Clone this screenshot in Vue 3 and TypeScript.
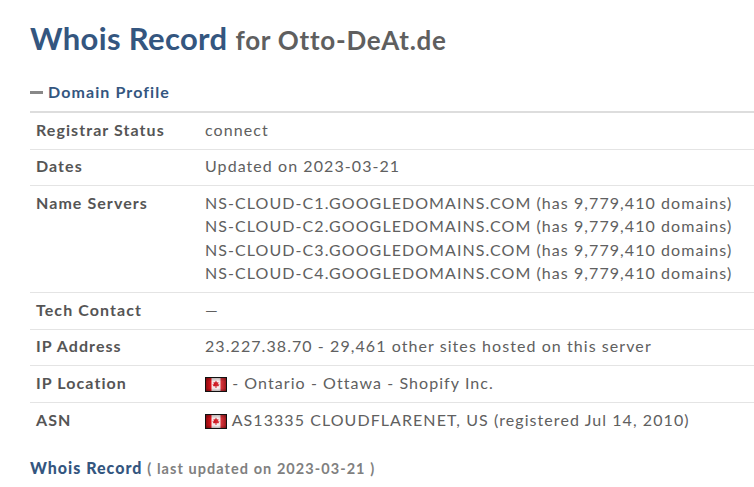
<script setup lang="ts">
const ns = ['C1', 'C2', 'C3', 'C4']
</script>

<template>
  <div class="page">
    <h1 class="title">Whois Record <small>for Otto-DeAt.de</small></h1>
    <div class="section"><span class="dash"></span>Domain Profile</div>
    <svg class="defs" width="0" height="0" aria-hidden="true">
      <defs>
        <linearGradient id="flagShade" x1="0" y1="0" x2="1" y2="0">
          <stop offset="0" stop-color="#000" stop-opacity=".45" />
          <stop offset=".3" stop-color="#000" stop-opacity=".02" />
          <stop offset=".55" stop-color="#fff" stop-opacity=".1" />
          <stop offset="1" stop-color="#000" stop-opacity=".4" />
        </linearGradient>
        <linearGradient id="flagShadeV" x1="0" y1="0" x2="0" y2="1">
          <stop offset="0" stop-color="#000" stop-opacity=".3" />
          <stop offset=".3" stop-color="#000" stop-opacity="0" />
          <stop offset=".75" stop-color="#000" stop-opacity="0" />
          <stop offset="1" stop-color="#000" stop-opacity=".35" />
        </linearGradient>
        <symbol id="caFlag" viewBox="0 0 22 15">
          <rect width="22" height="15" fill="#e8141c" />
          <rect x="6.500" y="1" width="9" height="13" fill="#fbeeee" />
          <path d="M11 3.500l1 2 1.500-.5-.5 2.500 1.500-.5-1 2.300h-2v1.700h-1V9.300h-2l-1-2.300 1.500.5-.5-2.500 1.500.5z" fill="#d0101a" />
          <rect width="22" height="15" fill="url(#flagShade)" />
          <rect width="22" height="15" fill="url(#flagShadeV)" />
          <rect x=".5" y=".5" width="21" height="14" fill="none" stroke="#111" stroke-width="1" />
        </symbol>
      </defs>
    </svg>
    <div class="table">
      <div class="row"><div class="k">Registrar Status</div><div class="v">connect</div></div>
      <div class="row"><div class="k">Dates</div><div class="v">Updated on 2023-03-21</div></div>
      <div class="row">
        <div class="k">Name Servers</div>
        <div class="v"><div v-for="n in ns" :key="n">NS-CLOUD-{{ n }}.GOOGLEDOMAINS.COM (has 9,779,410 domains)</div></div>
      </div>
      <div class="row"><div class="k">Tech Contact</div><div class="v">—</div></div>
      <div class="row"><div class="k">IP Address</div><div class="v">23.227.38.70 - 29,461 other sites hosted on this server</div></div>
      <div class="row"><div class="k">IP Location</div><div class="v"><svg class="flag"><use href="#caFlag" /></svg> - Ontario - Ottawa - Shopify Inc.</div></div>
      <div class="row"><div class="k">ASN</div><div class="v"><svg class="flag"><use href="#caFlag" /></svg> AS13335 CLOUDFLARENET, US (registered Jul 14, 2010)</div></div>
    </div>
    <div class="foot"><b>Whois Record</b> <span>( last updated on 2023-03-21 )</span></div>
  </div>
</template>

<style>
html, body { margin: 0; background: #fff; overflow: hidden; }
</style>
<style scoped>
.page { width: 754px; height: 487px; box-sizing: border-box; padding: 20px 0 0 30px; font-family: Lato, sans-serif; color: #555; overflow: hidden; }
.defs { position: absolute; }
.title { margin: 0; height: 37px; font-size: 31px; line-height: 37px; font-weight: 700; color: #34567f; letter-spacing: .35px; white-space: nowrap; }
.title small { font-size: 26px; color: #5f5f5f; font-weight: 700; letter-spacing: .75px; }
.section { margin-top: 25px; height: 20px; line-height: 20px; font-size: 16px; font-weight: 700; color: #34567f; letter-spacing: 1.1px; display: flex; align-items: center; }
.dash { width: 13px; height: 3px; background: #888; margin-right: 5px; }
.table { margin-top: 9px; border-top: 2px solid #ddd; width: 724px; }
.row { display: flex; border-bottom: 1px solid #e4e4e4; padding: 4.800px 0 7.400px 6px; font-size: 16px; line-height: 23.400px; letter-spacing: 1.070px; white-space: nowrap; }
.row:last-child { border-bottom: 0; }
.k { width: 169px; flex: none; font-weight: 700; }
.v { color: #606060; }
.flag { width: 22px; height: 15px; vertical-align: -3px; }
.foot { margin-top: 18px; line-height: 23px; font-weight: 700; white-space: nowrap; }
.foot b { color: #34567f; font-size: 16px; letter-spacing: 1px; }
.foot span { color: #808080; font-size: 14.500px; letter-spacing: 1.060px; margin-left: 1px; }
</style>
